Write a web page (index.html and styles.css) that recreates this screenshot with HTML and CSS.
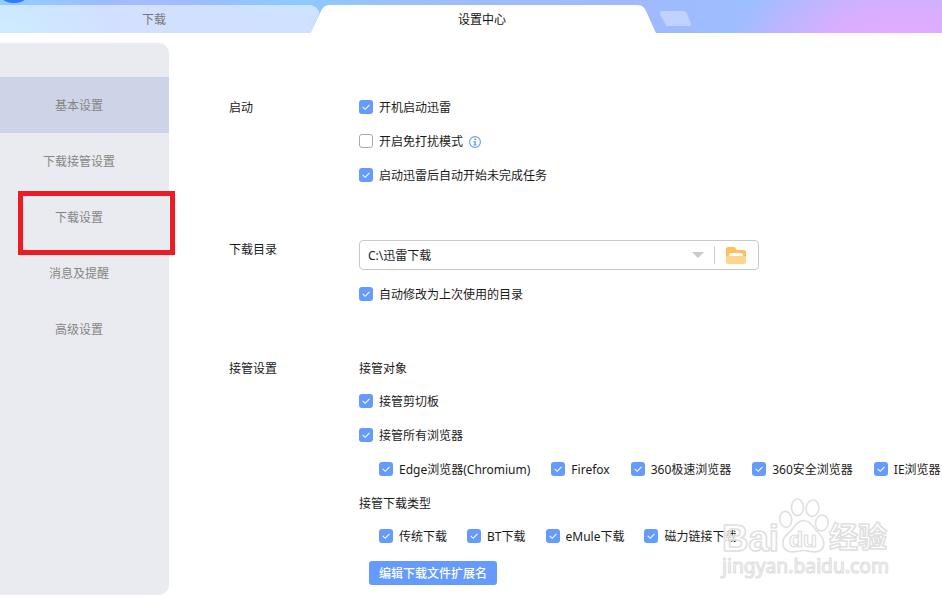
FILE: index.html
```html
<!DOCTYPE html>
<html lang="zh-CN">
<head>
  <meta charset="UTF-8" />
  <meta name="viewport" content="width=device-width, initial-scale=1.0" />
  <title>设置中心</title>
  <link rel="stylesheet" href="styles.css">
</head>
<body>
  <!-- icons -->
  <svg class="sprite" xmlns="http://www.w3.org/2000/svg">
    <symbol id="check" viewBox="0 0 14 14"><path d="M3.7 6.9 6.2 9.3 10.5 4.9" fill="none" stroke="#fff" stroke-width="1.1"/></symbol>
  </svg>

  <header class="tabs">
    <svg class="tabs-bg" width="942" height="33" viewBox="0 0 942 33">
      <circle cx="14" cy="-18" r="21" fill="#2f7cf8"/>
      <path d="M0 5H311Q317 6 319.5 13L310.5 33H0Z" fill="#fff" fill-opacity=".53"/>
      <path d="M310.5 33 320.5 12Q323.5 5 329 5H638Q643.5 5 646 11L656 33Z" fill="#fff"/>
      <path d="M662 11H683.5Q685.5 11 686.5 12.7L691 23.500Q691.5 26 689 26H668Q666.5 26 665.5 24.5L660 14Q659.5 11 662 11Z" fill="#fff" fill-opacity=".35"/>
    </svg>
    <div class="tab">下载</div>
    <div class="tab active">设置中心</div>
  </header>

  <div class="layout">
    <nav class="sidebar">
      <a class="item current">基本设置</a>
      <a class="item">下载接管设置</a>
      <a class="item">下载设置</a>
      <a class="item">消息及提醒</a>
      <a class="item">高级设置</a>
      <div class="highlight"></div>
    </nav>

    <main class="content">
      <section class="group startup">
        <div class="name">启动</div>
        <div class="options">
          <label class="row"><svg class="box"><use href="#check"/></svg>开机启动迅雷</label>
          <label class="row"><span class="box empty"></span>开启免打扰模式
            <svg class="info" viewBox="0 0 12 12"><circle cx="6" cy="6" r="5.4" fill="none" stroke="#659bff" stroke-width="1.1"/><path d="M5.2 2.500h1.700v1.400H5.200zM4.500 5h2.300v3.600h.8v.9H4.500v-.9h.8V5.900h-.8z" fill="#659bff"/></svg>
          </label>
          <label class="row"><svg class="box"><use href="#check"/></svg>启动迅雷后自动开始未完成任务</label>
        </div>
      </section>

      <section class="group directory">
        <div class="name">下载目录</div>
        <div class="options">
          <div class="path">
            <span class="path-text">C:\迅雷下载</span>
            <span class="arrow"></span>
            <span class="divider"></span>
            <svg class="folder" width="20" height="17" viewBox="0 0 20 17">
              <path d="M2 0H8Q9 0 9.500 1L10.500 3H18Q20 3 20 5V13H0V2Q0 0 2 0Z" fill="#ffc05b"/>
              <path d="M3 10V8Q3 6 5 6H15Q17 6 17 8V10Z" fill="#fff"/>
              <path d="M0 9H20V15Q20 17 18 17H2Q0 17 0 15Z" fill="#ffd48c"/>
            </svg>
          </div>
          <label class="row"><svg class="box"><use href="#check"/></svg>自动修改为上次使用的目录</label>
        </div>
      </section>

      <section class="group takeover">
        <div class="name">接管设置</div>
        <div class="options">
          <div class="row subtitle">接管对象</div>
          <label class="row"><svg class="box"><use href="#check"/></svg>接管剪切板</label>
          <label class="row"><svg class="box"><use href="#check"/></svg>接管所有浏览器</label>
          <div class="inline browsers">
            <label class="row"><svg class="box"><use href="#check"/></svg>Edge浏览器(Chromium)</label>
            <label class="row"><svg class="box"><use href="#check"/></svg>Firefox</label>
            <label class="row"><svg class="box"><use href="#check"/></svg>360极速浏览器</label>
            <label class="row"><svg class="box"><use href="#check"/></svg>360安全浏览器</label>
            <label class="row"><svg class="box"><use href="#check"/></svg>IE浏览器</label>
          </div>
          <div class="row subtitle">接管下载类型</div>
          <div class="inline">
            <label class="row"><svg class="box"><use href="#check"/></svg>传统下载</label>
            <label class="row"><svg class="box"><use href="#check"/></svg>BT下载</label>
            <label class="row"><svg class="box"><use href="#check"/></svg>eMule下载</label>
            <label class="row"><svg class="box"><use href="#check"/></svg>磁力链接下载</label>
          </div>
          <button type="button">编辑下载文件扩展名</button>
        </div>
      </section>
    </main>
  </div>

  <svg class="watermark" width="180" height="90" viewBox="715 495 180 90">
    <g fill="#fff" fill-opacity=".75" stroke="#e0e0e0" stroke-width="1.6" stroke-linejoin="round">
      <ellipse cx="785.7" cy="519.3" rx="6" ry="8" transform="rotate(-8 785.7 519.3)"/>
      <ellipse cx="797.5" cy="507.3" rx="6" ry="8.3"/>
      <ellipse cx="812.5" cy="508.3" rx="6.3" ry="8.3" transform="rotate(8 812.5 508.3)"/>
      <ellipse cx="821.8" cy="523" rx="6.3" ry="8" transform="rotate(10 821.8 523)"/>
      <path d="M803.5 520.5C811 520.5 814 529 819 533.5C825 539 826 549 818 551.5C812 553 808 550.5 803.5 550.5C798 550.5 795 553 789 551.5C781 549 781 539 788 533.5C794 529 796 520.5 803.5 520.5Z"/>
      <text class="wm-logo" x="722" y="550.5" font-size="37" textLength="57" lengthAdjust="spacingAndGlyphs">Bai</text>
      <text class="wm-logo wm-du" x="789" y="547" font-size="22" textLength="28" lengthAdjust="spacingAndGlyphs">du</text>
      <text class="wm-logo" x="829" y="548" font-size="29" textLength="58" lengthAdjust="spacingAndGlyphs">经验</text>
      <text class="wm-url" x="722" y="573" font-size="20" textLength="167" lengthAdjust="spacingAndGlyphs">jingyan.baidu.com</text>
    </g>
  </svg>
</body>
</html>
```
FILE: styles.css
```css
:root {
  --primary: #659bff;
  --side: #eaebf0;
  --side-current: #ced4e8;
  --muted: #858585;
  --text: #1a1a1a;
}
*, *::before, *::after { box-sizing: border-box; }
body {
  margin: 0; height: 599px; overflow: hidden; position: relative;
  font: 12px/16px "Noto Sans", "Noto Sans CJK SC", sans-serif;
  background: #fff; color: var(--text);
}
.sprite { position: absolute; width: 0; height: 0; }

.tabs {
  position: relative; height: 33px; padding-top: 5px; display: flex;
  background:
    radial-gradient(ellipse 170px 75px at 900px 40px, #e4aaff 0%, rgba(222,173,255,.9) 40%, rgba(180,180,255,0) 100%),
    radial-gradient(ellipse 110px 50px at 0 33px, #98d8ff, rgba(141,210,255,0)),
    radial-gradient(ellipse 110px 22px at 300px 0, #8ccaff, rgba(140,202,255,0)),
    linear-gradient(90deg, #90c3ff 0, #a2bdff 130px, #9abfff 300px, #9fbdff 400px, #a0b9ff 650px, #9dbeff 750px, #b8b5ff 942px);
}
.tabs-bg { position: absolute; left: 0; top: 0; }
.tab {
  position: relative; width: 308px; line-height: 30px;
  text-align: center; color: #777;
}
.tab.active { width: 348px; color: #111; }

.layout { display: flex; height: 566px; }

.sidebar {
  position: relative; flex: none; width: 169px; height: 552px;
  margin-top: 10px; padding-top: 34px;
  background: var(--side); border-radius: 0 10px 10px 0;
}
.item {
  display: block; height: 56px; line-height: 58px; padding-right: 11px;
  text-align: center; color: var(--muted);
}
.item.current { background: var(--side-current); }
.highlight {
  position: absolute; left: 18px; top: 148px; width: 157px; height: 64px;
  border: 5px solid #ed1c24;
}

.content { flex: 1; min-width: 0; padding: 57px 0 0 60px; }
.group { display: flex; }
.name { flex: none; width: 130px; line-height: 36px; }
.options { flex: 1; min-width: 0; }
.directory { margin-top: 40px; }
.takeover { margin-top: 40px; }

.row {
  display: flex; align-items: center; height: 34px; padding-top: 2px;
  white-space: nowrap;
}
.box {
  flex: none; width: 14px; height: 14px; margin: 0 6px 2px 0;
  background: var(--primary); border-radius: 3px;
}
.box.empty { background: #fff; border: 1px solid #aaa; }
.info { width: 12px; height: 12px; margin: 0 0 1px 6px; }
.subtitle { height: 33px; }
.inline { display: flex; gap: 20px; padding-left: 20px; }
.browsers { gap: 21px; }

.path {
  display: flex; align-items: center; width: 400px; height: 30px;
  margin: 8px 0 7px; padding: 0 12px 0 8px;
  border: 1px solid #c9c9c9; border-radius: 4px;
}
.path-text { flex: 1; padding-top: 2px; }
.arrow {
  border: 6px solid transparent; border-top-color: #c9c9c9; border-bottom: 0;
}
.divider { width: 1px; height: 18px; margin: 0 11px 0 10px; background: #ccc; }

button {
  display: block; width: 128px; height: 24px; margin: 8px 0 0 10px; padding: 2px 0 0;
  font: inherit; font-weight: 500; color: #fff;
  background: var(--primary); border: none; border-radius: 3px;
}

.watermark { position: absolute; left: 715px; top: 495px; }
.wm-logo { font-family: "Liberation Sans", "Noto Sans CJK SC", sans-serif; font-weight: 700; }
.wm-du { stroke-width: 1.2px; }
.wm-url { font-family: "Noto Sans", sans-serif; stroke-width: 1.2px; }
```
